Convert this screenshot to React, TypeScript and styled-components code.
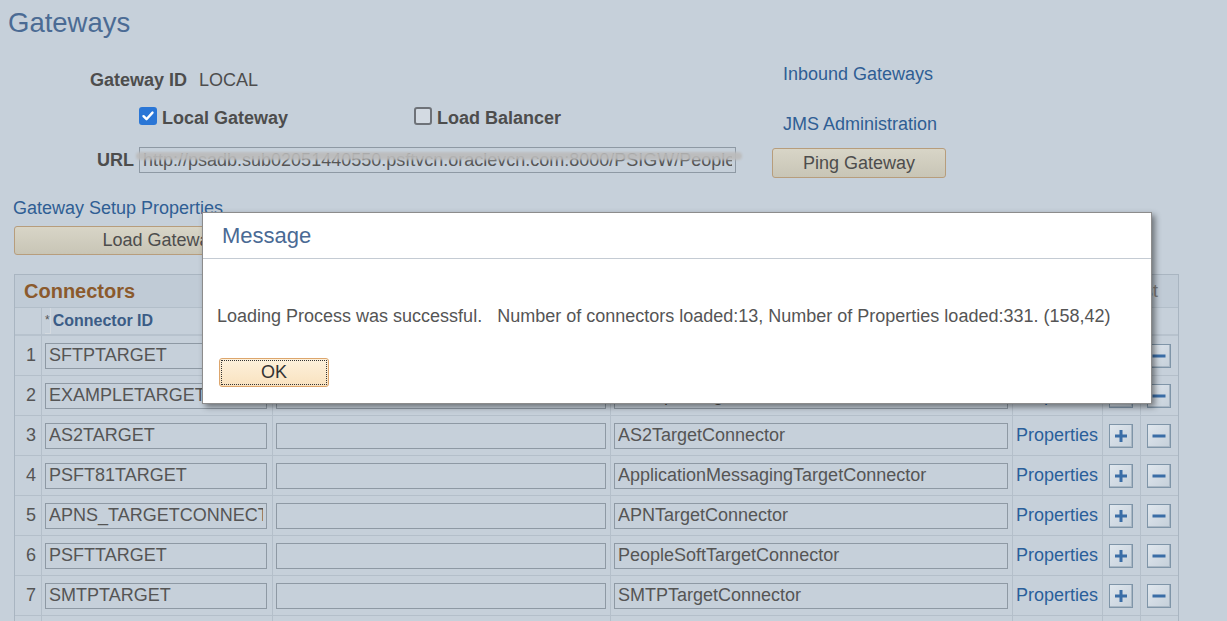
import * as React from 'react';
import styled, { createGlobalStyle } from 'styled-components';

const GlobalStyle = createGlobalStyle`
  html, body {
    margin: 0;
    padding: 0;
    overflow: hidden;
    background: #c6d0da;
  }
  body {
    font-family: 'Liberation Sans', Arial, sans-serif;
    color: #4d4d4d;
  }
`;

const Page = styled.div`
  position: relative;
  width: 1227px;
  height: 621px;
  overflow: hidden;
`;

const Title = styled.h1`
  margin: 0;
  padding: 8px 0 0 8px;
  font-size: 27.5px;
  line-height: 30px;
  font-weight: normal;
  color: #4b6b94;
`;

const Form = styled.div`
  display: flex;
  flex-direction: row;
`;

const LeftCol = styled.div`
  width: 772px;
  display: flex;
  flex-direction: column;
`;

const RightCol = styled.div`
  display: flex;
  flex-direction: column;
  align-items: flex-start;
`;

const FieldRow = styled.div<{ $indent: number; $top: number }>`
  display: flex;
  flex-direction: row;
  align-items: center;
  height: 24px;
  padding-left: ${p => p.$indent}px;
  margin-top: ${p => p.$top}px;
`;

const Label = styled.span`
  font-size: 18px;
  font-weight: bold;
  color: #4d4d4d;
`;

const Value = styled.span`
  font-size: 18px;
  color: #4d4d4d;
  margin-left: 12px;
`;

const CheckGroup = styled.label<{ $width?: number }>`
  display: flex;
  align-items: center;
  gap: 5px;
  width: ${p => (p.$width ? `${p.$width}px` : 'auto')};
`;

const Box = styled.span<{ $checked?: boolean }>`
  display: inline-flex;
  align-items: center;
  justify-content: center;
  box-sizing: border-box;
  width: 18px;
  height: 18px;
  border-radius: 3px;
  margin-top: -5px;
  background: ${p => (p.$checked ? '#2a76d6' : '#d3dae2')};
  border: ${p => (p.$checked ? 'none' : '2px solid #6e7278')};
`;

const UrlWrap = styled.div`
  position: relative;
  margin-left: 5px;
`;

const TextBox = styled.input<{ $width: number }>`
  box-sizing: border-box;
  width: ${p => p.$width}px;
  height: 26px;
  padding: 0 3px;
  border: 1px solid #8e99a4;
  background: transparent;
  font-family: 'Liberation Sans', Arial, sans-serif;
  font-size: 18px;
  color: #555;
  outline: none;
`;

const Redaction = styled.span`
  position: absolute;
  left: -3px;
  top: 5px;
  width: 606px;
  height: 8px;
  border-radius: 4px;
  background: #bcbcbc;
  opacity: 0.9;
  filter: blur(1px);
`;

const Link = styled.a<{ $top: number; $indent: number }>`
  display: block;
  font-size: 18px;
  line-height: 22px;
  color: #2f5e94;
  text-decoration: none;
  margin-top: ${p => p.$top}px;
  padding-left: ${p => p.$indent}px;
`;

const TanButton = styled.button<{ $width: number; $height: number; $top: number; $left?: number }>`
  box-sizing: border-box;
  width: ${p => p.$width}px;
  height: ${p => p.$height}px;
  margin-top: ${p => p.$top}px;
  margin-left: ${p => p.$left || 0}px;
  border: 1px solid #b79d7c;
  border-radius: 3px;
  background: linear-gradient(#d8d5c7, #c8c5b6);
  font-family: 'Liberation Sans', Arial, sans-serif;
  font-size: 18px;
  color: #4d4d4d;
  padding: 0;
`;

const Grid = styled.div`
  margin: 19px 0 0 14px;
  width: 1165px;
  box-sizing: border-box;
  border: 1px solid #a9b5c1;
  border-bottom: none;
  display: grid;
  grid-template-columns: 27px 231px 338px 402px 90px 38px 37px;
`;

const GridTitle = styled.div`
  grid-column: 1 / -1;
  height: 32px;
  border-bottom: 1px solid #b2bec9;
  background: #c0cbd6;
  display: flex;
  align-items: center;
  justify-content: space-between;
  padding: 0 20px 0 9px;
`;

const GridName = styled.span`
  font-size: 20px;
  font-weight: bold;
  color: #8b5a2d;
`;

const GridNav = styled.span`
  font-size: 18px;
  color: #7c7c7c;
  word-spacing: 3px;
`;

const HeadCell = styled.div<{ $last?: boolean }>`
  box-sizing: border-box;
  height: 28px;
  border-bottom: 2px solid #b7c2cd;
  border-right: ${p => (p.$last ? 'none' : '1px solid #b4bfca')};
  display: flex;
  align-items: center;
  padding-left: 3px;
  font-size: 16px;
  font-weight: bold;
  color: #3b5c86;
`;

const Req = styled.span`
  font-size: 12px;
  font-weight: normal;
  color: #555;
  align-self: stretch;
  display: flex;
  align-items: flex-start;
  padding-top: 5px;
  margin-right: 2px;
  border: 1px solid #d4dae0;
  border-top: none;
  border-left: none;
`;

const Cell = styled.div<{ $last?: boolean; $align?: string; $pad?: number }>`
  box-sizing: border-box;
  height: 40px;
  border-bottom: 1px solid #b4bfca;
  border-right: ${p => (p.$last ? 'none' : '1px solid #b4bfca')};
  display: flex;
  align-items: center;
  justify-content: ${p => p.$align || 'flex-start'};
  padding-left: ${p => (p.$pad !== undefined ? p.$pad : 3)}px;
  padding-right: ${p => (p.$align === 'flex-end' ? 5 : 0)}px;
  font-size: 18px;
  color: #555;
`;

const PropLink = styled.a`
  font-size: 18px;
  color: #2a5f9a;
  text-decoration: none;
`;

const IconButton = styled.span`
  box-sizing: border-box;
  width: 24px;
  height: 24px;
  border: 1px solid #7f95a8;
  background: linear-gradient(135deg, #e0e7ee, #c5d0da);
  box-shadow: inset -1px -1px 0 #a9b7c4;
  display: flex;
  align-items: center;
  justify-content: center;
`;

const Modal = styled.div`
  position: absolute;
  left: 202px;
  top: 212px;
  width: 950px;
  height: 192px;
  box-sizing: border-box;
  background: #fff;
  border: 1px solid #8c8c8c;
  box-shadow: 3px 3px 6px rgba(0, 0, 0, 0.45);
`;

const ModalHead = styled.div`
  height: 45px;
  border-bottom: 1px solid #c4cbd3;
  display: flex;
  align-items: center;
  padding-left: 19px;
  font-size: 22px;
  color: #4a6a94;
`;

const ModalBody = styled.div`
  padding: 46px 14px 0;
  display: flex;
  flex-direction: column;
  align-items: flex-start;
`;

const ModalText = styled.p`
  margin: 0;
  font-size: 18px;
  line-height: 22px;
  color: #555;
  white-space: pre;
`;

const OkButton = styled.button`
  position: relative;
  box-sizing: border-box;
  width: 110px;
  height: 29px;
  margin: 31px 0 0 2px;
  border: 1px solid #dda66d;
  border-radius: 3px;
  background: linear-gradient(#fdf1dc, #f9e2bf);
  font-family: 'Liberation Sans', Arial, sans-serif;
  font-size: 18px;
  color: #333;
  padding: 0;
  &::after {
    content: '';
    position: absolute;
    inset: 1px;
    border: 1px dotted #333;
  }
`;

const rows = [
  ['SFTPTARGET', 'SFTPTargetConnector'],
  ['EXAMPLETARGET', 'ExampleTargetConnector'],
  ['AS2TARGET', 'AS2TargetConnector'],
  ['PSFT81TARGET', 'ApplicationMessagingTargetConnector'],
  ['APNS_TARGETCONNECTOR', 'APNTargetConnector'],
  ['PSFTTARGET', 'PeopleSoftTargetConnector'],
  ['SMTPTARGET', 'SMTPTargetConnector'],
];

const Check = () => (
  <svg width="14" height="14" viewBox="0 0 14 14">
    <path d="M2.5 7.2l3 3L11.5 3.6" fill="none" stroke="#fff" strokeWidth="2.4" strokeLinecap="round" strokeLinejoin="round" />
  </svg>
);

const Plus = () => (
  <svg width="16" height="16" viewBox="0 0 16 16">
    <path d="M8 2v12M2 8h12" stroke="#3a6da6" strokeWidth="3" />
  </svg>
);

const Minus = () => (
  <svg width="16" height="16" viewBox="0 0 16 16">
    <path d="M1.5 8h13" stroke="#3a6da6" strokeWidth="3" />
  </svg>
);

const App = () => {
  return (
    <Page>
      <GlobalStyle />
      <Title>Gateways</Title>

      <Form>
        <LeftCol>
          <FieldRow $indent={90} $top={30}>
            <Label>Gateway ID</Label>
            <Value>LOCAL</Value>
          </FieldRow>
          <FieldRow $indent={139} $top={14}>
            <CheckGroup $width={275}>
              <Box $checked>
                <Check />
              </Box>
              <Label>Local Gateway</Label>
            </CheckGroup>
            <CheckGroup>
              <Box />
              <Label>Load Balancer</Label>
            </CheckGroup>
          </FieldRow>
          <FieldRow $indent={97} $top={18}>
            <Label>URL</Label>
            <UrlWrap>
              <TextBox
                $width={597}
                readOnly
                value="http://psadb.sub02051440550.psftvcn.oraclevcn.com:8000/PSIGW/PeopleSoftListeningConnector"
              />
              <Redaction />
            </UrlWrap>
          </FieldRow>
        </LeftCol>

        <RightCol>
          <Link $top={25} $indent={11}>Inbound Gateways</Link>
          <Link $top={28} $indent={11}>JMS Administration</Link>
          <TanButton $width={174} $height={30} $top={13}>Ping Gateway</TanButton>
        </RightCol>
      </Form>

      <Link $top={19} $indent={13}>Gateway Setup Properties</Link>
      <TanButton $width={390} $height={29} $top={7} $left={14}>
        Load Gateway Connectors
      </TanButton>

      <Grid>
        <GridTitle>
          <GridName>Connectors</GridName>
          <GridNav>Personalize | Find | View All | First 1-13 of 13 Last</GridNav>
        </GridTitle>
        <HeadCell />
        <HeadCell>
          <Req>*</Req>Connector ID
        </HeadCell>
        <HeadCell>Connector Subtype</HeadCell>
        <HeadCell>Connector Class Name</HeadCell>
        <HeadCell />
        <HeadCell />
        <HeadCell $last />

        {rows.map(([id, cls], index) => (
          <React.Fragment key={`row-${index + 1}`}>
            <Cell $align="flex-end" $pad={0}>{index + 1}</Cell>
            <Cell>
              <TextBox $width={222} readOnly value={id} />
            </Cell>
            <Cell>
              <TextBox $width={330} readOnly value="" />
            </Cell>
            <Cell>
              <TextBox $width={394} readOnly value={cls} />
            </Cell>
            <Cell>
              <PropLink>Properties</PropLink>
            </Cell>
            <Cell $pad={6}>
              <IconButton>
                <Plus />
              </IconButton>
            </Cell>
            <Cell $pad={6} $last>
              <IconButton>
                <Minus />
              </IconButton>
            </Cell>
          </React.Fragment>
        ))}
        {[0, 1, 2, 3, 4, 5, 6].map(col => (
          <Cell key={`filler-${col}`} $last={col === 6} />
        ))}
      </Grid>

      <Modal>
        <ModalHead>Message</ModalHead>
        <ModalBody>
          <ModalText>
            {'Loading Process was successful.   Number of connectors loaded:13, Number of Properties loaded:331. (158,42)'}
          </ModalText>
          <OkButton>OK</OkButton>
        </ModalBody>
      </Modal>
    </Page>
  );
};

export default App;
